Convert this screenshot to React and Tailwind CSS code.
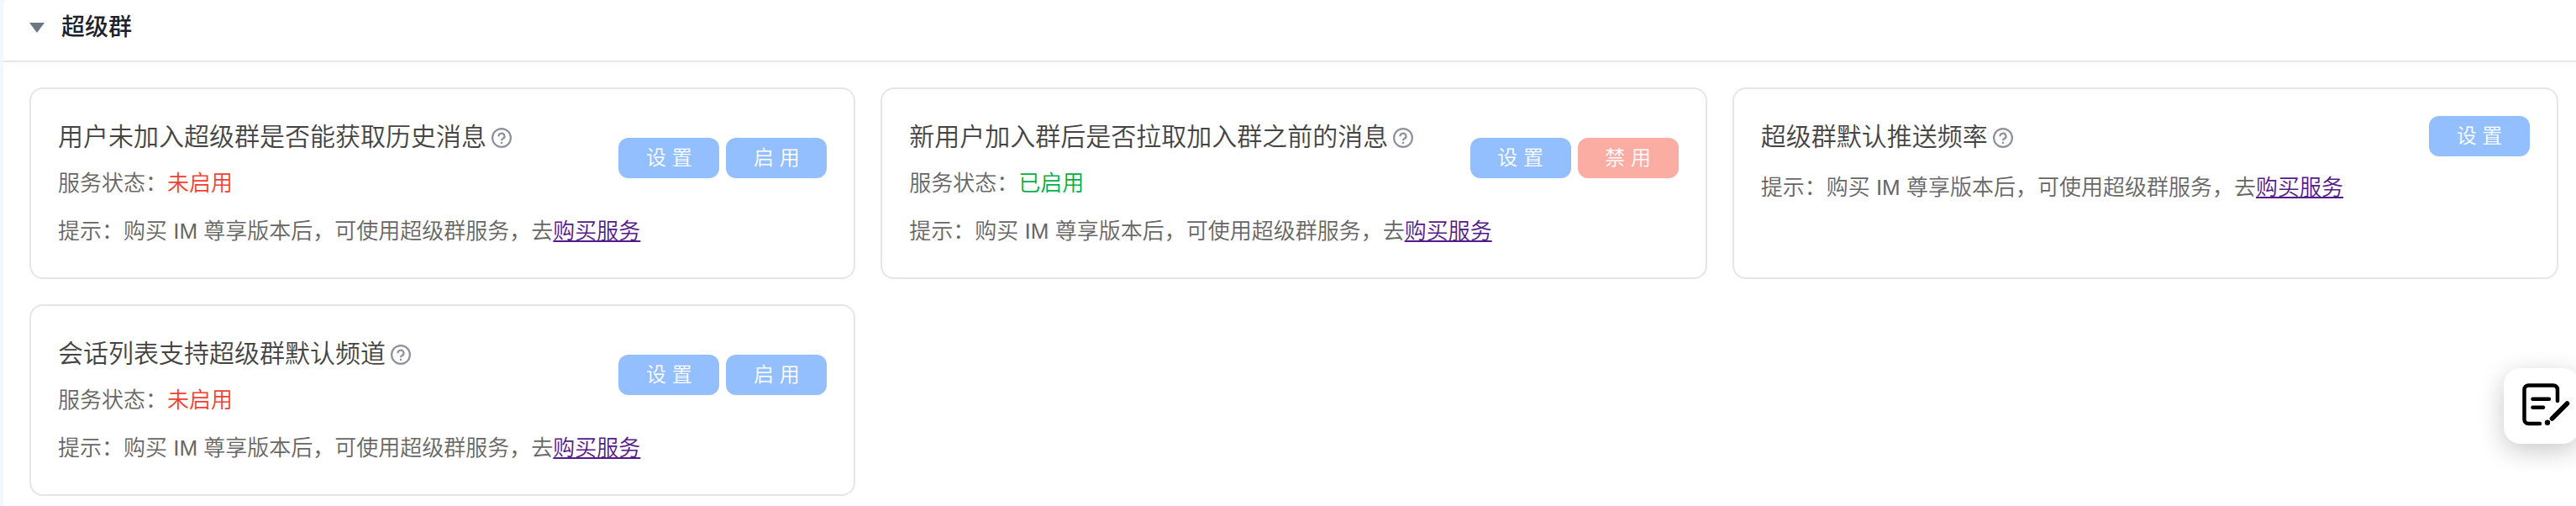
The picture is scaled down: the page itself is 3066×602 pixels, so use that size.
import React from "react";

const services = [
  { title: "用户未加入超级群是否能获取历史消息", status: "off", actions: ["set", "enable"] },
  { title: "新用户加入群后是否拉取加入群之前的消息", status: "on", actions: ["set", "disable"] },
  { title: "超级群默认推送频率", status: null, actions: ["set"] },
  { title: "会话列表支持超级群默认频道", status: "off", actions: ["set", "enable"] },
];

const actionMap = {
  set: { label: "设 置", color: "bg-[#94bfff]" },
  enable: { label: "启 用", color: "bg-[#94bfff]" },
  disable: { label: "禁 用", color: "bg-[#fbaca3]" },
};

function HelpIcon() {
  return (
    <svg className="ml-1.5 mt-0.5 h-6 w-6 shrink-0" viewBox="0 0 24 24" fill="none" stroke="#8c919c" strokeWidth="2.2">
      <circle cx="12" cy="12" r="10.900" />
      <path d="M8.500 10.200a3.500 3.300 0 1 1 5 2.800c-1 .5-1.500 1-1.500 2.300" />
      <path d="M12 16.800v2.300" />
    </svg>
  );
}

function NoteIcon() {
  return (
    <svg className="h-[54px] w-[58px] shrink-0" viewBox="0 0 58 54" fill="none" stroke="#000" strokeWidth="4.5" strokeLinecap="round">
      <path d="M42 21V7.400a5 5 0 0 0-5-5H7.500a5 5 0 0 0-5 5V43a5 5 0 0 0 5 5H21" />
      <path d="M12.500 18.700H32M12.500 28.700H25" />
      <path d="M35.500 42l18-18" strokeWidth="5.6" />
      <circle cx="30" cy="46.800" r="3.200" fill="#000" stroke="none" />
    </svg>
  );
}

function ServiceCard({ title, status, actions }) {
  return (
    <div className="flex h-[228px] justify-between rounded-2xl border-2 border-[#e5e6eb] bg-white px-8">
      <div className="min-w-0 whitespace-nowrap pt-[36px] text-[26px] font-[350] leading-[40px] text-[#666]">
        <div className="flex h-[42px] items-center text-[30px] leading-[42px] text-[#444]">
          <span>{title}</span>
          <HelpIcon />
        </div>
        {status && (
          <div className="mt-[14px]">
            服务状态：
            {status === "on" ? (
              <span className="text-[#00b042]">已启用</span>
            ) : (
              <span className="text-[#f53f2f]">未启用</span>
            )}
          </div>
        )}
        <div className={status ? "mt-[17px]" : "mt-[19px]"}>
          提示：购买 IM 尊享版本后，可使用超级群服务，去
          <a href="#" className="text-[#551a8b] underline decoration-2 underline-offset-2">购买服务</a>
        </div>
      </div>
      <div className={`flex shrink-0 gap-2 ${status ? "pt-[58px]" : "pt-8"}`}>
        {actions.map((a) => (
          <button
            key={a}
            className={`h-12 w-[120px] rounded-xl text-2xl leading-none font-[350] text-white cursor-not-allowed ${actionMap[a].color}`}
          >
            {actionMap[a].label}
          </button>
        ))}
      </div>
    </div>
  );
}

export default function App() {
  return (
    <div className="relative h-[602px] w-[3066px] overflow-hidden bg-[#f2f8ff] pl-1 font-['Liberation_Sans','Noto_Sans_CJK_SC',sans-serif]">
      <div className="h-full rounded-tl-lg bg-white">
        <div className="flex h-[74px] items-center border-b-2 border-[#e5e6eb] pb-1.5 pl-[31px]">
          <svg className="h-[12px] w-[18px]" viewBox="0 0 18 12">
            <path d="M0 0h18L9 12z" fill="#6b7785" />
          </svg>
          <h2 className="ml-5 text-[28px] font-medium leading-10 text-[#1d2129]">超级群</h2>
        </div>
        <div className="grid grid-cols-3 gap-[30px] pl-[31px] pr-[21px] pt-[30px]">
          {services.map((s) => (
            <ServiceCard key={s.title} {...s} />
          ))}
        </div>
      </div>

      {/* feedback button, sticks out past the right edge */}
      <button className="absolute left-[2980px] top-[438px] flex h-[90px] w-[90px] items-center rounded-[20px] bg-white pl-[22px] shadow-[0_8px_30px_rgba(0,0,0,0.22)]">
        <NoteIcon />
      </button>
    </div>
  );
}
